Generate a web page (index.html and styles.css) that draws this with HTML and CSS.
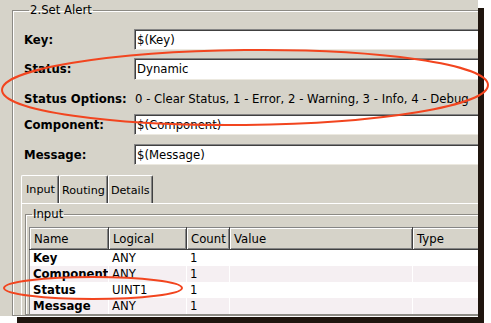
FILE: index.html
```html
<!DOCTYPE html>
<html lang="en">
<head>
    <meta charset="UTF-8">
    <title>Set Alert</title>
    <link rel="stylesheet" href="styles.css">
</head>
<body>
    <div class="frame">
        <div class="shot">
            <fieldset class="group">
                <legend>2.Set Alert</legend>

                <div class="field field-key">
                    <label>Key:</label>
                    <div class="input">$(Key)</div>
                </div>
                <div class="field field-status">
                    <label>Status:</label>
                    <div class="input">Dynamic</div>
                </div>
                <div class="field field-options">
                    <label>Status Options:</label>
                    <span class="options">0 - Clear Status, 1 - Error, 2 - Warning, 3 - Info, 4 - Debug</span>
                </div>
                <div class="field field-component">
                    <label>Component:</label>
                    <div class="input">$(Component)</div>
                </div>
                <div class="field field-message">
                    <label>Message:</label>
                    <div class="input">$(Message)</div>
                </div>

                <div class="tabs">
                    <div class="tab active">Input</div>
                    <div class="tab">Routing</div>
                    <div class="tab">Details</div>
                </div>
                <div class="tab-panel">
                    <fieldset class="group inner">
                        <legend>Input</legend>
                        <table class="grid">
                            <thead>
                                <tr>
                                    <th class="c-name">Name</th>
                                    <th class="c-logical">Logical</th>
                                    <th class="c-count">Count</th>
                                    <th class="c-value">Value</th>
                                    <th class="c-type">Type</th>
                                </tr>
                            </thead>
                            <tbody>
                                <tr><td class="c-name">Key</td><td>ANY</td><td>1</td><td></td><td></td></tr>
                                <tr class="alt"><td class="c-name">Component</td><td>ANY</td><td>1</td><td></td><td></td></tr>
                                <tr><td class="c-name">Status</td><td>UINT1</td><td>1</td><td></td><td></td></tr>
                                <tr class="alt"><td class="c-name">Message</td><td>ANY</td><td>1</td><td></td><td></td></tr>
                            </tbody>
                        </table>
                    </fieldset>
                </div>
            </fieldset>
        </div>

        <!-- red annotation marks -->
        <svg class="marks" width="491" height="323" viewBox="0 0 491 323">
            <ellipse cx="245" cy="87.5" rx="243" ry="37.5" transform="rotate(-0.6 245 87.5)"/>
            <ellipse cx="93" cy="288" rx="89" ry="11"/>
        </svg>
    </div>
</body>
</html>
```

FILE: styles.css
```css
body {
    margin: 0;
    background-color: #fff;
    font-family: 'DejaVu Sans', sans-serif;
    font-size: 11.7px;
    color: #000;
}
.frame {
    position: relative;
    width: 491px;
    height: 323px;
}
/* drop shadow of the captured window */
.frame::before {
    content: '';
    position: absolute;
    left: 478px;
    top: 8px;
    width: 6px;
    height: 315px;
    background-color: #1f150e;
}
.frame::after {
    content: '';
    position: absolute;
    left: 17px;
    top: 317px;
    width: 467px;
    height: 6px;
    background-color: #1f150e;
}
.shot {
    width: 478px;
    height: 316px;
    background-color: #d6d3c9;
    overflow: hidden;
}
.marks {
    position: absolute;
    left: 0;
    top: 0;
}
.marks ellipse {
    fill: none;
    stroke: #f2451f;
    stroke-width: 2;
}

/* group boxes */
.group {
    margin: 0;
    padding: 0 0 0 11px;
    border: 1px solid #8c8a84;
    box-shadow: inset 1px 1px 0 #fff;
    min-width: 0;
}
.group legend {
    padding: 0 1px;
    margin-left: 5px;
    line-height: 14px;
}
.shot > .group {
    margin: 3px -40px 0 12px;
}

/* label + input rows */
.field {
    display: flex;
    align-items: center;
    height: 21px;
}
.field label {
    width: 110px;
    flex: none;
    font-weight: bold;
}
.options {
    margin-left: 1px;
}
.field-key { margin-top: 12px; }
.field-status { margin-top: 8px; height: 22px; }
.field-options { margin-top: 9px; height: 20px; }
.field-component { margin-top: 5px; }
.field-message { margin-top: 9px; }
.input {
    flex: 1;
    align-self: stretch;
    display: flex;
    align-items: center;
    padding-left: 2px;
    background-color: #fff;
    border-top: 1px solid #858585;
    border-left: 1px solid #858585;
    border-bottom: 1px solid #ece9e0;
    box-shadow: inset 1px 1px 0 #404040;
}

/* tabs */
.tabs {
    display: flex;
    align-items: flex-end;
    height: 28px;
    margin: 10px 0 0 -3px;
    font-size: 11.2px;
}
.tab {
    height: 25px;
    padding: 2px 2px 0 2px;
    display: flex;
    align-items: center;
    border-top: 1px solid #fff;
    border-left: 1px solid #fff;
    border-right: 1px solid #404040;
    box-shadow: inset -1px 0 0 #858585;
    border-radius: 2px 2px 0 0;
}
.tab.active {
    height: 27px;
    padding: 0 3px 0 4px;
}
.tab-panel {
    margin-left: -3px;
    padding: 0 0 0 3px;
    border-top: 1px solid #fff;
    border-left: 1px solid #fff;
}
.group.inner {
    margin-top: 3px;
    padding: 0 0 0 3px;
}
.group.inner legend {
    margin-left: 3px;
}

/* list view */
.grid {
    border-collapse: collapse;
    margin-top: 6px;
    width: 460px;
    border-left: 1px solid #858585;
    border-top: 1px solid #858585;
    table-layout: fixed;
}
.grid th {
    height: 21px;
    padding: 0 0 0 4px;
    text-align: left;
    font-weight: normal;
    background-color: #d6d3c9;
    border-right: 1px solid #404040;
    border-bottom: 1px solid #404040;
    box-shadow: inset 1px 1px 0 #fff, inset -1px -1px 0 #858585;
}
.grid td {
    height: 16px;
    padding: 0 0 0 3px;
    background-color: #fff;
    border-right: 1px solid #fff;
    white-space: nowrap;
    overflow: hidden;
}
.grid tr.alt td {
    background-color: #f5eff2;
}
.grid td.c-name {
    font-weight: bold;
}
.c-name { width: 74px; }
.c-logical { width: 73px; }
.c-count { width: 38px; }
.c-value { width: 178px; }
.c-type { width: 72px; }
```
